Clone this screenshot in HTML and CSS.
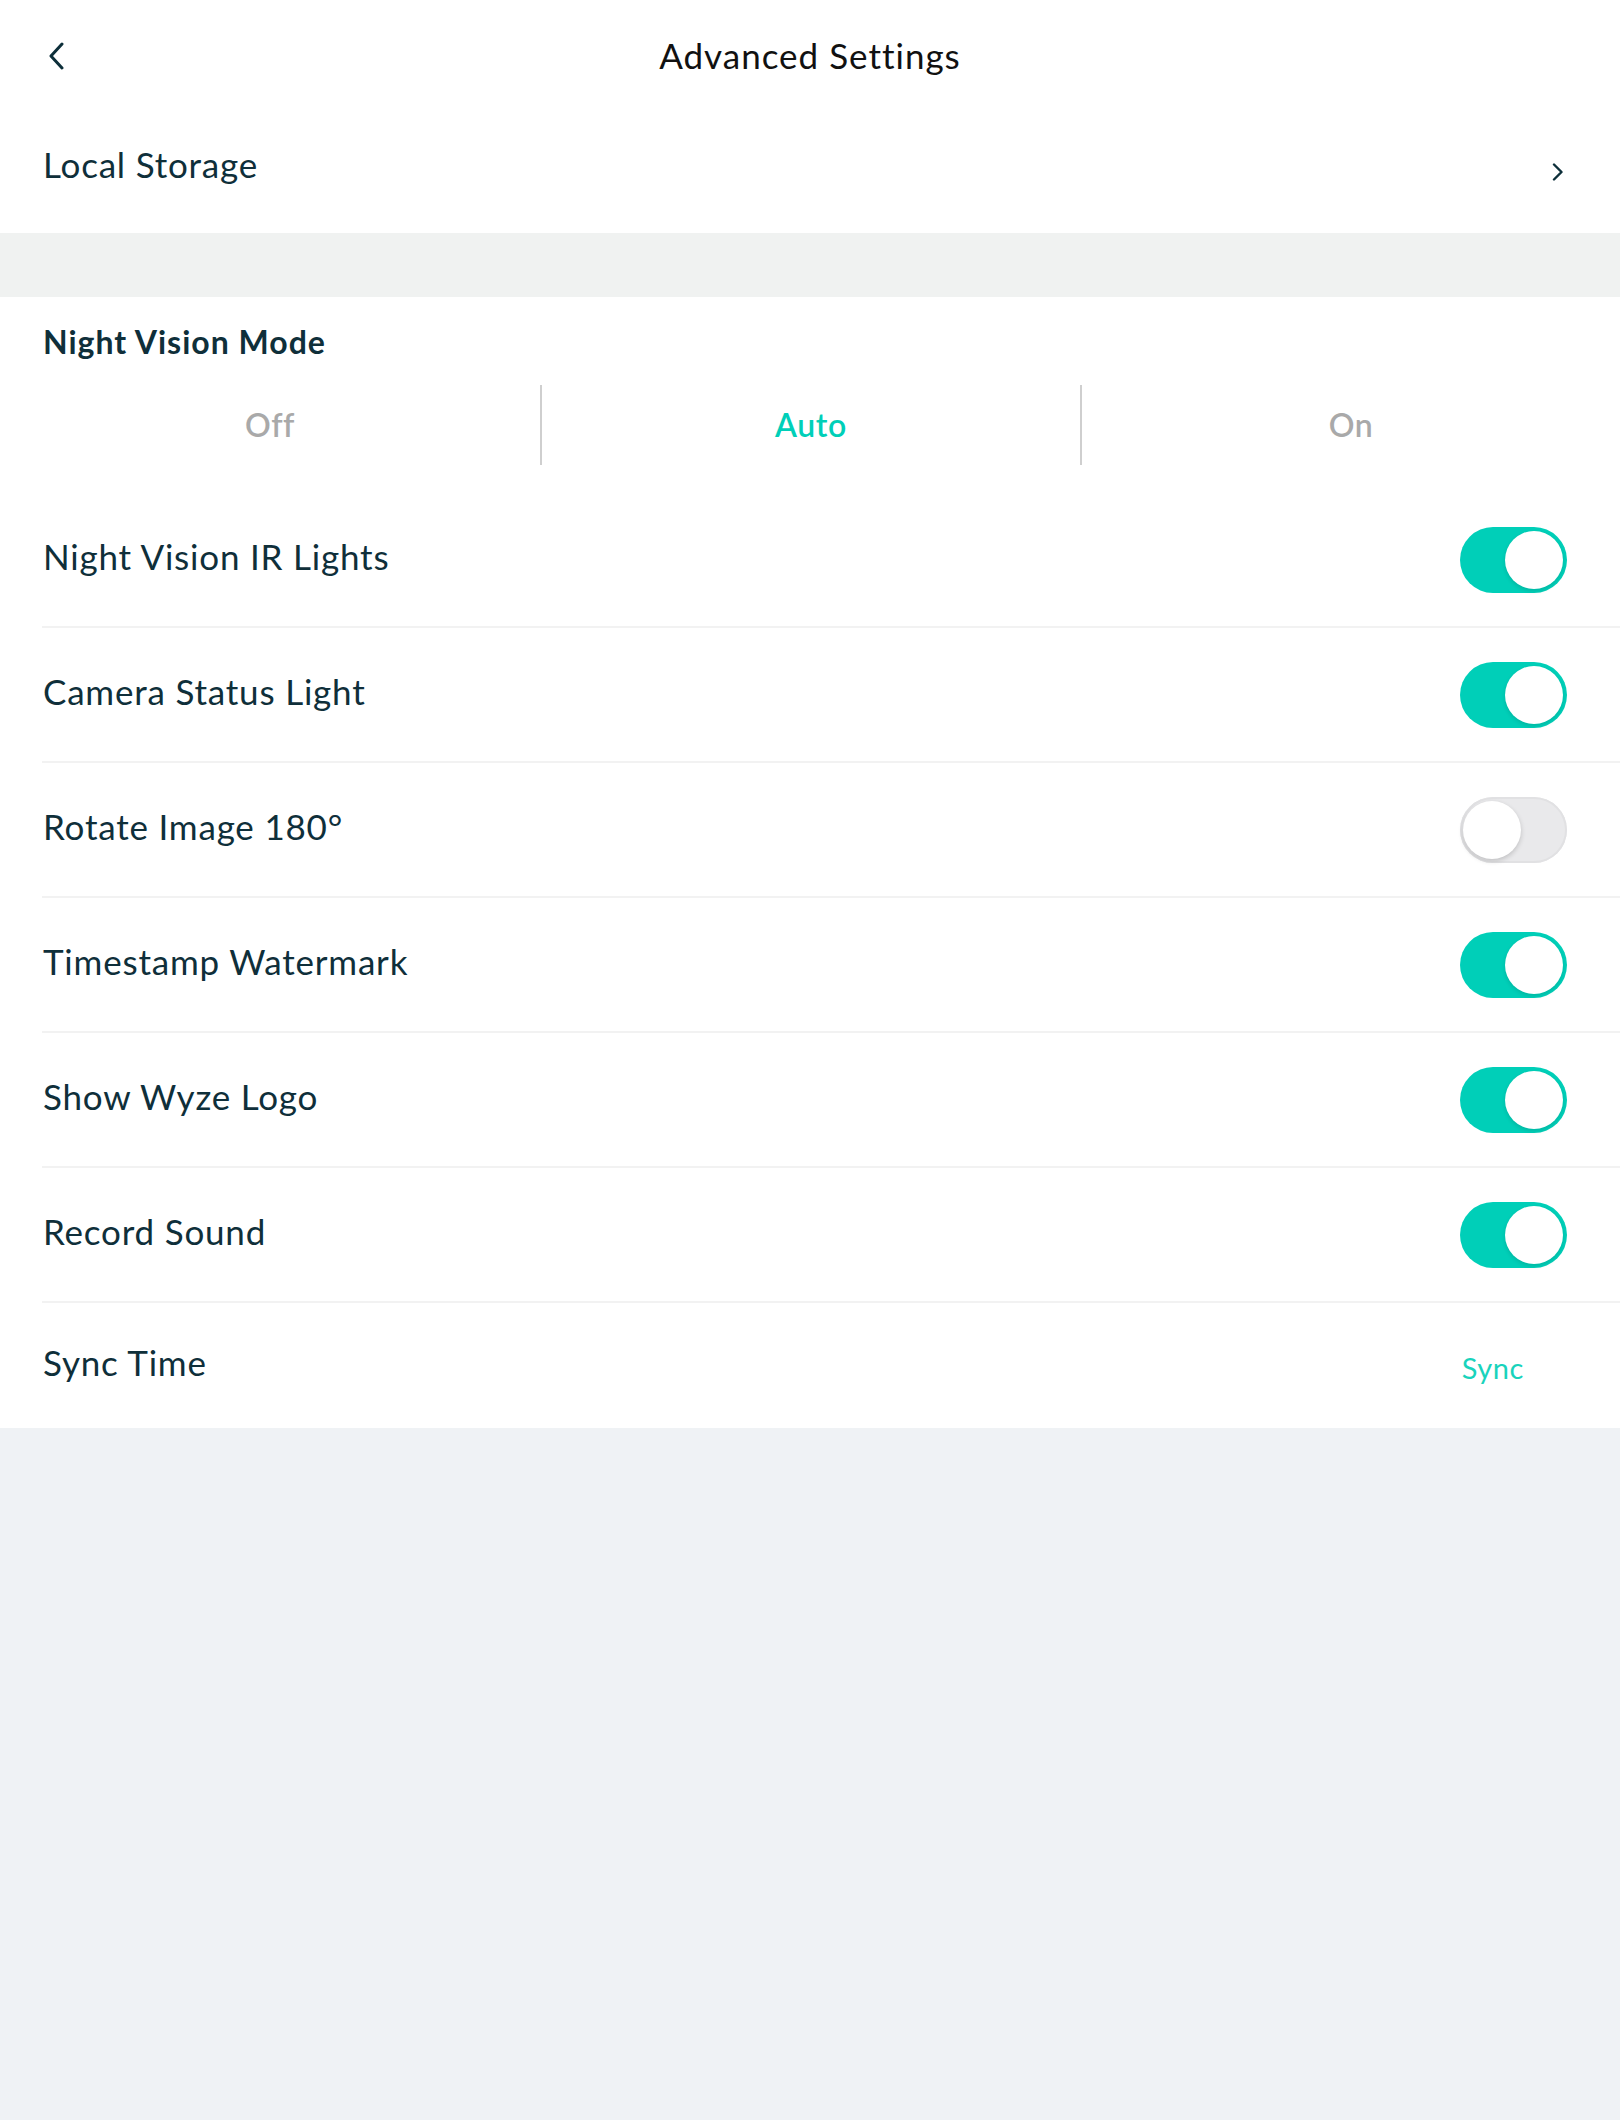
FILE: index.html
```html
<!DOCTYPE html>
<html lang="en">
<head>
<meta charset="utf-8">
<title>Advanced Settings</title>
<link rel="stylesheet" href="styles.css">
</head>
<body>
<div class="page">
  <section class="card top">
    <header class="header">
      <div class="back">
        <svg width="18" height="28" viewBox="0 0 18 28"><path d="M15 2 L4 14 L15 26" fill="none" stroke="#0d2f3a" stroke-width="3" stroke-linecap="round" stroke-linejoin="round"/></svg>
      </div>
      <h1 class="title">Advanced Settings</h1>
      <div></div>
    </header>
    <div class="link-row">
      <span class="label">Local Storage</span>
      <svg class="chev" width="12" height="18" viewBox="0 0 12 18"><path d="M2 1.5 L9.5 9 L2 16.5" fill="none" stroke="#0d2f3a" stroke-width="2.4" stroke-linecap="round" stroke-linejoin="round"/></svg>
    </div>
  </section>
  <div class="spacer"></div>
  <section class="card main">
    <h2 class="section-title">Night Vision Mode</h2>
    <div class="segments">
      <div class="seg">Off</div>
      <div class="seg active">Auto</div>
      <div class="seg">On</div>
    </div>
    <div class="rows">
      <div class="row"><span class="label">Night Vision IR Lights</span><span class="toggle on"><span class="knob"></span></span></div>
      <div class="row"><span class="label">Camera Status Light</span><span class="toggle on"><span class="knob"></span></span></div>
      <div class="row"><span class="label">Rotate Image 180°</span><span class="toggle off"><span class="knob"></span></span></div>
      <div class="row"><span class="label">Timestamp Watermark</span><span class="toggle on"><span class="knob"></span></span></div>
      <div class="row"><span class="label">Show Wyze Logo</span><span class="toggle on"><span class="knob"></span></span></div>
      <div class="row"><span class="label">Record Sound</span><span class="toggle on"><span class="knob"></span></span></div>
      <div class="row last"><span class="label">Sync Time</span><span class="sync">Sync</span></div>
    </div>
  </section>
</div>
</body>
</html>
```
FILE: styles.css
```css
* { box-sizing: border-box; }
html, body { margin: 0; padding: 0; }
body {
  background: #eff2f5;
  font-family: Lato, "Open Sans", sans-serif;
  color: #0f2f3a;
  width: 1620px;
  min-height: 2120px;
}
.card { background: #fff; }
.header {
  height: 110px;
  display: grid;
  grid-template-columns: 1fr auto 1fr;
  align-items: center;
}
.back { padding-left: 47px; display: flex; align-items: center; padding-top: 2px; }
.title {
  margin: 0;
  font-weight: 400;
  font-size: 35px;
  color: #111;
  letter-spacing: 1px;
}
.link-row {
  height: 123px;
  display: flex;
  align-items: center;
  justify-content: space-between;
  padding: 0 56px 0 43px;
}
.link-row .label { padding-bottom: 16px; }
.label { font-size: 35px; letter-spacing: 0.8px; }
.chev { display: block; }
.spacer { height: 64px; background: #f0f2f1; }
.main { padding-top: 25px; }
.section-title {
  margin: 0 0 0 43px;
  font-size: 32px;
  line-height: 40px;
  font-weight: 700;
  letter-spacing: 1px;
}
.segments {
  margin-top: 23px;
  height: 80px;
  display: grid;
  grid-template-columns: 1fr 1fr 1fr;
}
.seg {
  display: flex;
  align-items: center;
  justify-content: center;
  font-size: 32px;
  color: #a9a9a9;
  font-weight: 600;
  letter-spacing: 0.6px;
  padding-bottom: 2px;
}
.seg + .seg { border-left: 2px solid #cfcfcf; }
.seg.active { color: #00cfb8; }
.rows { margin-top: 28px; }
.row {
  margin-left: 42px;
  height: 135px;
  border-bottom: 2px solid #f2f2f2;
  display: flex;
  align-items: center;
  justify-content: space-between;
  padding: 0 53px 0 1px;
}
.row .label { padding-bottom: 8px; }
.row.last { height: 125px; border-bottom: none; padding-right: 96px; }
.toggle {
  position: relative;
  width: 107px;
  height: 66px;
  border-radius: 33px;
  flex: none;
}
.toggle.on { background: #00cfb8; }
.toggle.off { background: #e9e9eb; box-shadow: inset 0 0 0 2px #e1e1e3; }
.knob {
  position: absolute;
  top: 4px;
  width: 58px;
  height: 58px;
  border-radius: 50%;
  background: #fff;
  box-shadow: 0 2px 4px rgba(0,0,0,0.12);
}
.toggle.on .knob { right: 4px; }
.toggle.off .knob { left: 3px; box-shadow: 0 2px 5px rgba(0,0,0,0.18); }
.sync { font-size: 29px; color: #19d3bc; padding-top: 4px; letter-spacing: 0.6px; }
```
